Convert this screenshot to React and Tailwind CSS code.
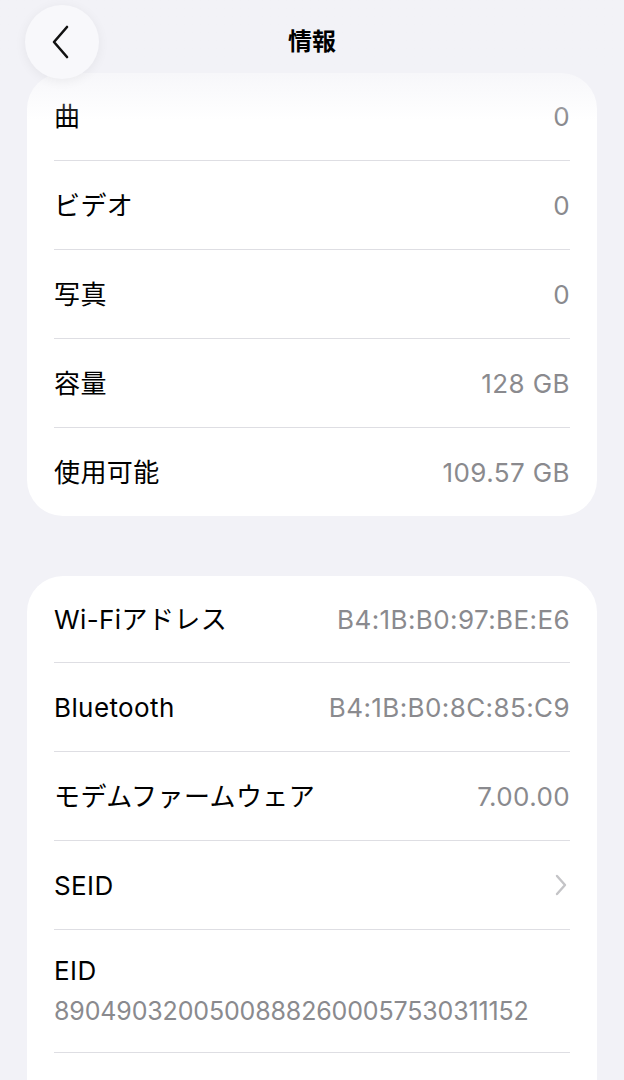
import React from "react";

const font = { fontFamily: 'Inter, "Noto Sans CJK JP", sans-serif' };

function Row({ label, value, chevron, first, last }) {
  return (
    <div>
      <div className={`flex items-center justify-between ${first ? "h-[87px]" : "h-[88px]"}`}>
        <span className="text-[26px] text-black tracking-[0.4px]">{label}</span>
        {chevron ? (
          <svg width="14" height="24" viewBox="0 0 14 24" fill="none" className="mr-[2px]">
            <path d="M3 3 L11 12 L3 21" stroke="#c4c4c7" strokeWidth="2.4" strokeLinecap="round" strokeLinejoin="round" />
          </svg>
        ) : (
          <span className="text-[26px] text-[#8a8a8e] tracking-[0.4px]">{value}</span>
        )}
      </div>
      {!last && <div className="h-px bg-[#dedee3]" />}
    </div>
  );
}

export default function App() {
  const card1 = [
    ["曲", "0"],
    ["ビデオ", "0"],
    ["写真", "0"],
    ["容量", "128 GB"],
    ["使用可能", "109.57 GB"],
  ];
  const card2 = [
    ["Bluetooth", "B4:1B:B0:8C:85:C9"],
    ["モデムファームウェア", "7.00.00"],
  ];
  return (
    <div className="relative w-[624px] h-[1080px] overflow-hidden bg-[#f2f2f7]" style={font}>
      <div className="pt-[73px] px-[27px] flex flex-col gap-[60px]">
        <div className="bg-white rounded-[36px] px-[27px]">
          {card1.map(([l, v], i) => (
            <Row key={l} label={l} value={v} first={i === 0} last={i === card1.length - 1} />
          ))}
        </div>
        <div className="bg-white rounded-t-[36px] px-[27px] pb-[40px]">
          <div className="flex items-center justify-between h-[86px]">
            <span className="text-[26px] text-black tracking-[0.4px]">Wi-Fiアドレス</span>
            <span className="text-[26px] text-[#8a8a8e] tracking-[0.4px]">B4:1B:B0:97:BE:E6</span>
          </div>
          <div className="h-px bg-[#dedee3]" />
          {card2.map(([l, v]) => (
            <Row key={l} label={l} value={v} />
          ))}
          <Row label="SEID" chevron />
          <div className="h-[122px] flex flex-col justify-center gap-[6px]">
            <span className="text-[26px] text-black leading-[34px] tracking-[0.4px]">EID</span>
            <span className="text-[25px] text-[#8a8a8e] leading-[34px] tracking-[-0.15px]">89049032005008882600057530311152</span>
          </div>
          <div className="h-px bg-[#dedee3]" />
        </div>
      </div>

      {/* header fade overlay */}
      <div className="absolute inset-x-0 top-0 h-[120px] bg-gradient-to-b from-[#f2f2f7] via-[#f2f2f7]/80 to-transparent pointer-events-none" />

      {/* header */}
      <div className="absolute inset-x-0 top-0 h-[84px] flex items-center justify-center">
        <span className="text-[24px] font-bold text-black">情報</span>
      </div>
      <div className="absolute left-[25px] top-[5px] w-[74px] h-[74px] rounded-full bg-[#f8f8fb] shadow-[0_2px_12px_rgba(0,0,0,0.06)] flex items-center justify-center">
        <svg width="20" height="34" viewBox="0 0 20 34" fill="none" className="mr-[3px]">
          <path d="M16 2 L3 17 L16 32" stroke="#111" strokeWidth="2.6" strokeLinecap="round" strokeLinejoin="round" />
        </svg>
      </div>
    </div>
  );
}
